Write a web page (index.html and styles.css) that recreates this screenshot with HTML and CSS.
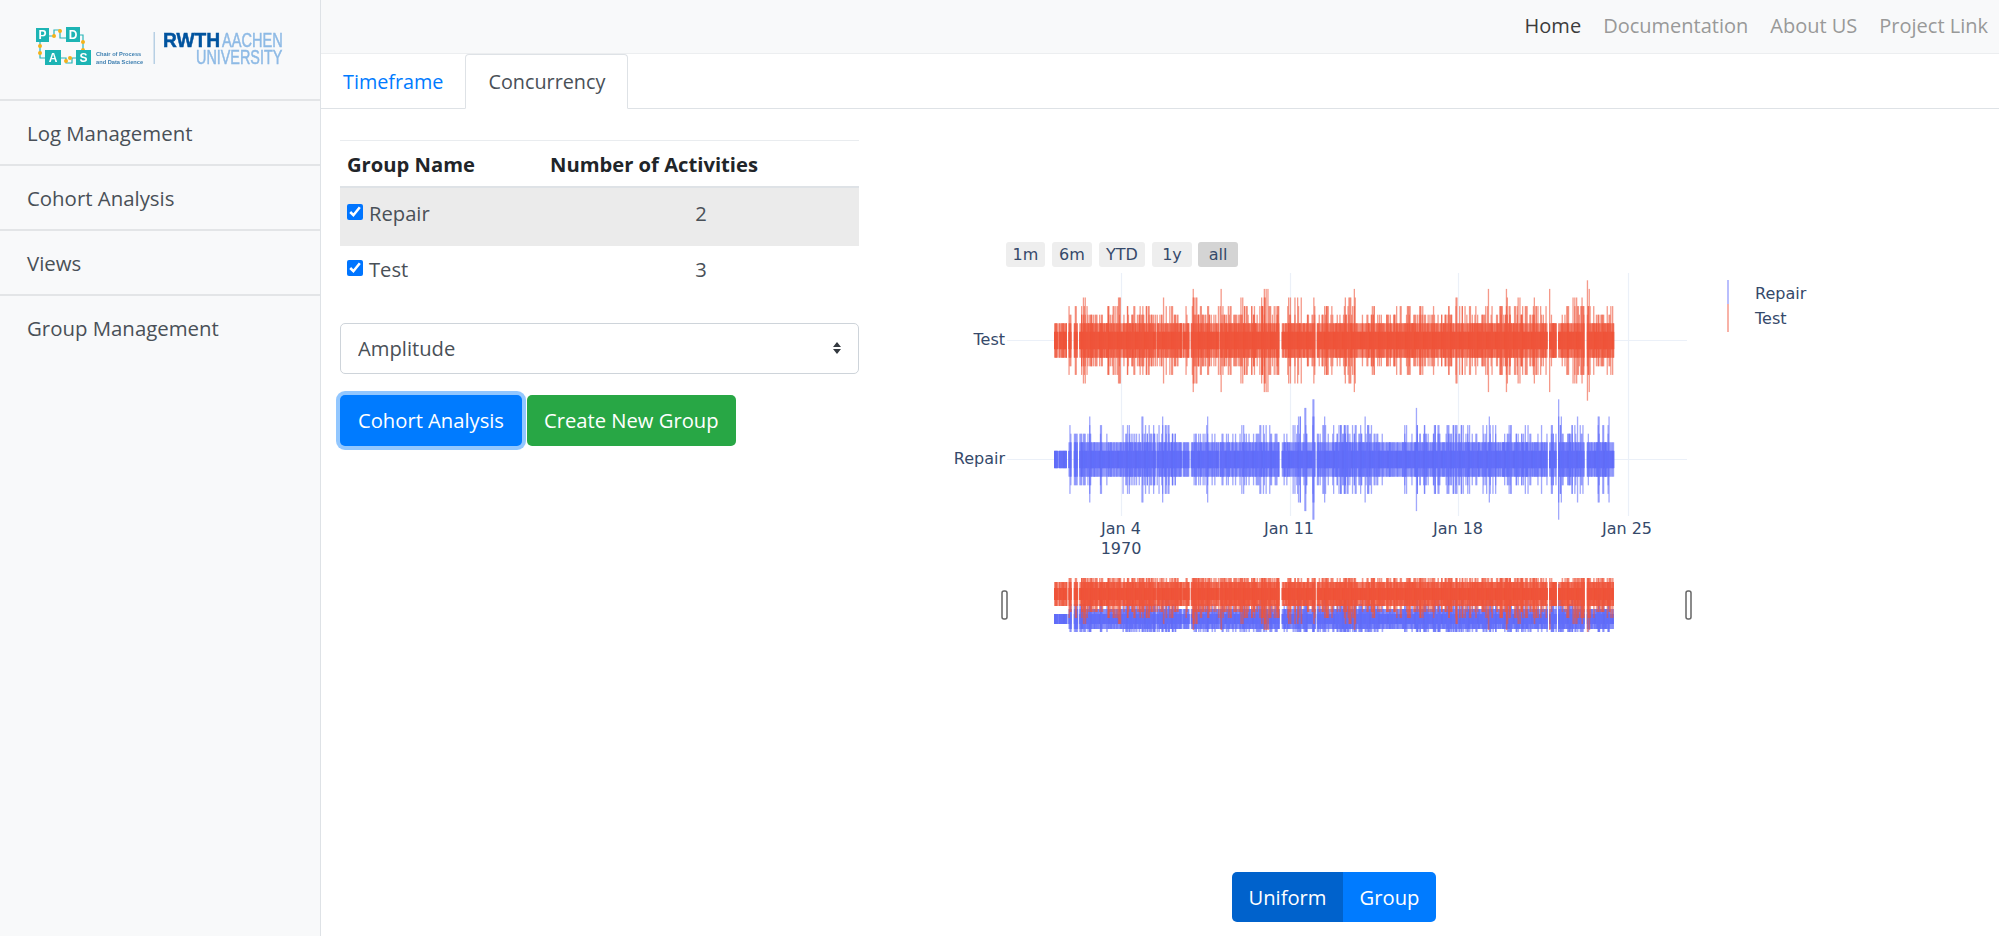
FILE: index.html
```html
<!DOCTYPE html>
<html lang="en">
<head>
    <meta charset="UTF-8">
    <title>Concurrency</title>
    <link rel="stylesheet" href="styles.css">
</head>
<body>
    <div class="app">
        <aside class="sidebar">
            <div class="logo-box">
                <svg class="logo" width="320" height="98" viewBox="0 0 320 98">
                    <path class="logo-wire" d="M48 36 H54 V30 H60 V38 H66 M80 35 H83 V58 H76 M61 58 H66 V63 H72 V58 H76 M45 58 H40 V42" />
                    <circle class="logo-dot" cx="54" cy="36" r="2"/><circle class="logo-dot" cx="60" cy="31" r="2"/>
                    <circle class="logo-dot" cx="83" cy="42" r="2"/><circle class="logo-dot" cx="83" cy="50" r="2"/>
                    <circle class="logo-dot" cx="40" cy="46" r="2"/><circle class="logo-dot" cx="40" cy="53" r="2"/>
                    <circle class="logo-dot" cx="66" cy="61" r="2"/><circle class="logo-dot" cx="70" cy="58" r="2"/>
                    <rect class="logo-tile" x="36" y="28" width="13" height="14"/>
                    <rect class="logo-tile" x="66" y="27" width="14" height="15"/>
                    <rect class="logo-tile" x="45" y="50" width="16" height="15"/>
                    <rect class="logo-tile" x="76" y="50" width="15" height="15"/>
                    <text class="logo-letter" x="42.5" y="39">P</text>
                    <text class="logo-letter" x="73" y="39">D</text>
                    <text class="logo-letter" x="53" y="62">A</text>
                    <text class="logo-letter" x="83.5" y="62">S</text>
                    <text class="logo-small" transform="translate(96 56) scale(0.95 1)">Chair of Process</text>
                    <text class="logo-small" transform="translate(96 64) scale(0.95 1)">and Data Science</text>
                    <rect class="logo-rule" x="153.500" y="32" width="1.500" height="32"/>
                    <text class="logo-rwth" transform="translate(163 47) scale(0.96 1)">RWTH</text>
                    <text class="logo-aachen" transform="translate(222 47) scale(0.73 1)">AACHEN</text>
                    <text class="logo-aachen" transform="translate(196 64) scale(0.72 1)">UNIVERSITY</text>
                </svg>
            </div>
            <a class="side-link" href="#">Log Management</a>
            <a class="side-link" href="#">Cohort Analysis</a>
            <a class="side-link" href="#">Views</a>
            <a class="side-link" href="#">Group Management</a>
        </aside>

        <div class="content">
            <nav class="topnav">
                <a class="topnav-link active" href="#">Home</a>
                <a class="topnav-link" href="#">Documentation</a>
                <a class="topnav-link" href="#">About US</a>
                <a class="topnav-link" href="#">Project Link</a>
            </nav>

            <div class="tabs">
                <a class="tab" href="#">Timeframe</a>
                <a class="tab tab-active" href="#">Concurrency</a>
            </div>

            <div class="panel">
                <div class="left-col">
                    <table class="group-table">
                        <thead>
                            <tr><th class="name-col">Group Name</th><th>Number of Activities</th></tr>
                        </thead>
                        <tbody>
                            <tr class="row-selected">
                                <td><label class="check"><input type="checkbox" checked>Repair</label></td>
                                <td class="count">2</td>
                            </tr>
                            <tr>
                                <td><label class="check"><input type="checkbox" checked>Test</label></td>
                                <td class="count">3</td>
                            </tr>
                        </tbody>
                    </table>

                    <select class="metric-select">
                        <option>Amplitude</option>
                    </select>

                    <div class="actions">
                        <button class="btn btn-blue btn-focus">Cohort Analysis</button>
                        <button class="btn btn-green">Create New Group</button>
                    </div>
                </div>

                <div class="chart-col">
                    <svg id="chart" class="chart" width="940" height="470" viewBox="880 200 940 470">
                        <defs>
                            <clipPath id="sliderClip"><rect x="1054" y="578" width="560" height="54"/></clipPath>
                        </defs>

                        <g class="range-btn"><rect x="1006" y="242" width="39" height="25" rx="3"/><text x="1025.500" y="260">1m</text></g>
                        <g class="range-btn"><rect x="1052" y="242" width="40" height="25" rx="3"/><text x="1072" y="260">6m</text></g>
                        <g class="range-btn"><rect x="1099" y="242" width="46" height="25" rx="3"/><text x="1122" y="260">YTD</text></g>
                        <g class="range-btn"><rect x="1152" y="242" width="40" height="25" rx="3"/><text x="1172" y="260">1y</text></g>
                        <g class="range-btn range-btn-on"><rect x="1198" y="242" width="40" height="25" rx="3"/><text x="1218" y="260">all</text></g>

                        <path class="grid" d="M1121.500 273 V516 M1290.500 273 V516 M1458.500 273 V516 M1628.500 273 V516 M1007 340.500 H1687 M1007 459.500 H1687"/>

                        <g id="bars"></g>
                        <g id="sliderBars" clip-path="url(#sliderClip)"></g>

                        <text class="tick tick-end" x="1005" y="345">Test</text>
                        <text class="tick tick-end" x="1005" y="464">Repair</text>
                        <text class="tick tick-mid" x="1121" y="534">Jan 4</text>
                        <text class="tick tick-mid" x="1121" y="554">1970</text>
                        <text class="tick tick-mid" x="1289" y="534">Jan 11</text>
                        <text class="tick tick-mid" x="1458" y="534">Jan 18</text>
                        <text class="tick tick-mid" x="1627" y="534">Jan 25</text>

                        <rect class="handle" x="1002" y="591" width="5" height="28" rx="2"/>
                        <rect class="handle" x="1686" y="591" width="5" height="28" rx="2"/>

                        <rect class="legend-repair" x="1727" y="280" width="2" height="24"/>
                        <rect class="legend-test" x="1727" y="304" width="2" height="28"/>
                        <text class="tick" x="1755" y="299">Repair</text>
                        <text class="tick" x="1755" y="324">Test</text>
                    </svg>

                    <div class="segment">
                        <button class="segment-btn segment-on">Uniform</button>
                        <button class="segment-btn">Group</button>
                    </div>
                </div>
            </div>
        </div>
    </div>

    <script src="chart.js"></script>
</body>
</html>
```

FILE: styles.css
```css
:root {
    --primary-color: #007bff;
    --primary-dark: #0062cc;
    --green-color: #28a745;
    --border-color: #dee2e6;
    --side-color: #f8f9fa;
    --text-color: #495057;
    --plot-text: #35496a;
}

* {
    box-sizing: border-box;
}

body {
    margin: 0;
    background: white;
    font-family: 'Open Sans', Arial, sans-serif;
    font-size: 20.2px;
    color: var(--text-color);
}

a {
    text-decoration: none;
}

.app {
    display: flex;
    height: 936px;
    overflow: hidden;
}

.sidebar {
    width: 321px;
    flex: none;
    background: var(--side-color);
    border-right: 1px solid var(--border-color);
}

.logo-box {
    height: 99px;
}

.logo {
    display: block;
    filter: blur(0.6px);
}

.logo-wire {
    fill: none;
    stroke: #2bb5b8;
    stroke-width: 1.2;
}

.logo-dot {
    fill: #f5b21a;
}

.logo-tile {
    fill: #1db4b4;
}

.logo-letter {
    font: bold 12px 'Liberation Sans', Arial, sans-serif;
    fill: white;
    text-anchor: middle;
}

.logo-small {
    font: bold 6px 'Liberation Sans', Arial, sans-serif;
    fill: #3d7fb0;
}

.logo-rule {
    fill: #b7d0e4;
}

.logo-rwth {
    font: bold 20px 'Liberation Sans', Arial, sans-serif;
    fill: #00549f;
    stroke: #00549f;
    stroke-width: 0.5;
}

.logo-aachen {
    font: 20px 'Liberation Sans', Arial, sans-serif;
    fill: #8ebae5;
    stroke: #8ebae5;
    stroke-width: 0.5;
}

.side-link {
    display: flex;
    align-items: center;
    height: 65px;
    padding-left: 27px;
    border-top: 2px solid #e3e5e7;
    color: var(--text-color);
    font-size: 20.4px;
}

.content {
    flex: 1;
    min-width: 0;
}

.topnav {
    display: flex;
    justify-content: flex-end;
    align-items: center;
    gap: 22px;
    height: 54px;
    padding: 0 11px 2px 0;
    background: var(--side-color);
    border-bottom: 1px solid #eceef0;
    font-size: 20px;
}

.topnav-link {
    color: #999;
}

.topnav-link.active {
    color: #3c3c3c;
}

.tabs {
    display: flex;
    height: 55px;
    padding-left: 1px;
    border-bottom: 1px solid var(--border-color);
    font-size: 19.8px;
}

.tab {
    display: flex;
    align-items: center;
    padding: 0 20px;
    color: var(--primary-color);
    height: 55px;
    border: 1px solid transparent;
    border-radius: 4px 4px 0 0;
}

.tab-active {
    margin-left: 1px;
    padding: 0 22px;
    color: var(--text-color);
    background: white;
    border-color: var(--border-color) var(--border-color) white;
}

.panel {
    display: flex;
}

.left-col {
    width: 519px;
    flex: none;
    margin: 31px 0 0 19px;
}

.group-table {
    width: 100%;
    border-collapse: collapse;
    table-layout: fixed;
    border-top: 1px solid #e9ecef;
}

.group-table th {
    height: 46px;
    padding: 2px 7px 0;
    text-align: left;
    font-weight: 700;
    color: #212529;
    border-bottom: 2px solid #dee2e6;
}

.group-table .name-col {
    width: 203px;
}

.group-table td {
    height: 48px;
    padding: 0 7px 2px;
}

.group-table .row-selected td {
    height: 59px;
    padding-bottom: 7px;
    background: #ebebeb;
}

.count {
    text-align: center;
}

.check {
    display: flex;
    align-items: center;
    gap: 6px;
}

.check input {
    width: 16px;
    height: 16px;
    margin: 0 0 2px;
    accent-color: #0075ff;
}

.metric-select {
    display: block;
    width: 100%;
    height: 51px;
    margin-top: 29px;
    padding: 0 17px;
    border: 1px solid #ced4da;
    border-radius: 5px;
    appearance: none;
    background: white url("data:image/svg+xml,%3Csvg xmlns='http://www.w3.org/2000/svg' width='10' height='14'%3E%3Cpath fill='%23343a40' d='M5 1 9 6H1zM5 13 1 8h8z'/%3E%3C/svg%3E") no-repeat right 16px center;
    font-family: inherit;
    font-size: inherit;
    color: var(--text-color);
}

.actions {
    display: flex;
    gap: 5px;
    margin-top: 21px;
}

.btn {
    height: 51px;
    padding: 0 17px;
    border: none;
    border-radius: 5px;
    color: white;
    font-family: inherit;
    font-size: inherit;
}

.btn-blue {
    padding: 0 18px;
    background: var(--primary-color);
}

.btn-focus {
    box-shadow: 0 0 0 4px rgba(38,143,255,0.5);
}

.btn-green {
    background: var(--green-color);
}

.chart-col {
    flex: 1;
    padding-top: 91px;
    margin-left: 21px;
}

.chart {
    display: block;
}

.range-btn rect {
    fill: #eeeeee;
}

.range-btn-on rect {
    fill: #d4d4d4;
}

.range-btn text {
    font: 16px 'DejaVu Sans', Verdana, sans-serif;
    fill: var(--plot-text);
    text-anchor: middle;
}

.grid {
    fill: none;
    stroke: #ebf0f8;
    stroke-width: 1.2;
}

.tick {
    font: 16px 'DejaVu Sans', Verdana, sans-serif;
    fill: var(--plot-text);
}

.tick-end {
    text-anchor: end;
}

.tick-mid {
    text-anchor: middle;
}

.handle {
    fill: white;
    stroke: #666;
    stroke-width: 1.5;
}

.legend-repair {
    fill: #636efa;
    opacity: 0.45;
}

.legend-test {
    fill: #ef553b;
    opacity: 0.45;
}

.segment {
    display: flex;
    width: 204px;
    margin: 202px 0 0 352px;
    border-radius: 5px;
    overflow: hidden;
}

.segment-btn {
    flex: none;
    height: 50px;
    width: 93px;
    padding: 0;
    border: none;
    background: var(--primary-color);
    color: white;
    font-family: inherit;
    font-size: inherit;
}

.segment-on {
    width: 111px;
    background: var(--primary-dark);
}
```

FILE: chart.js
```js
// draws the two noisy bar traces and the range slider copy of them
var SVG_NS = 'http://www.w3.org/2000/svg';
var START_X = 1054;
var END_X = 1613;
var STEP = 0.9;
var TIER_PX = 8.6;

// no data in these x ranges, both traces share them
var gaps = [[1057, 1058], [1066, 1068], [1071, 1073], [1077, 1079], [1155, 1156], [1181, 1182], [1189, 1190],
    [1218, 1219.5], [1279, 1281], [1315, 1316], [1547, 1549], [1556, 1558], [1584, 1586.5]];

// height limit of a short burst, index + 1 = tier
var testCaps = [0, 0, 0.3, 0.3, 0.22, 0.14, 0.04];
var repairCaps = [0, 0.12, 0.33, 0.3, 0.16, 0.07, 0.02];

var seed = 20421;
function rand() {
    seed = (seed * 16807) % 2147483647;
    return seed / 2147483647;
}

function pickTier(weights) {
    var r = rand();
    for (var i = 0; i < weights.length; i++) {
        r -= weights[i];
        if (r <= 0) return i + 1;
    }
    return 1;
}

function inGap(x) {
    return gaps.some(function(g) { return x >= g[0] && x <= g[1]; });
}

function makeTrace(caps, baseTier, startCap) {
    var events = [];
    var burstEnd = 0;
    var cap = 1;
    for (var x = START_X; x < END_X; x += STEP) {
        if (inGap(x)) continue;
        if (x >= burstEnd) {
            burstEnd = x + 2 + rand() * 7;
            cap = pickTier(caps);
        }
        var limit = x < 1068 ? startCap : cap;
        // one bar always reaches the base height, the others are mostly low
        events.push({ x: x, tier: Math.min(limit, baseTier) });
        for (var n = 0; n < 3; n++) {
            var r = rand();
            var tier = Math.ceil(r * r * r * limit);
            events.push({ x: x, tier: Math.min(limit, Math.max(1, tier)) });
        }
    }
    return events;
}

function drawTrace(parent, events, color, centerY, tierPx, width) {
    events.forEach(function(e) {
        var rect = document.createElementNS(SVG_NS, 'rect');
        var half = e.tier * tierPx;
        rect.setAttribute('x', e.x.toFixed(1));
        rect.setAttribute('y', (centerY - half).toFixed(1));
        rect.setAttribute('width', width);
        rect.setAttribute('height', (half * 2).toFixed(1));
        rect.setAttribute('fill', color);
        rect.setAttribute('opacity', '0.6');
        parent.appendChild(rect);
    });
}

var repair = makeTrace(repairCaps, 2, 1);
var test = makeTrace(testCaps, 2, 2);

var bars = document.getElementById('bars');
drawTrace(bars, repair, '#636efa', 459.5, TIER_PX, 1.3);
drawTrace(bars, test, '#ef553b', 340.5, TIER_PX, 1.3);

var sliderBars = document.getElementById('sliderBars');
drawTrace(sliderBars, repair, '#636efa', 619, 5, 1.6);
drawTrace(sliderBars, test, '#ef553b', 594, 6, 1.6);
```
